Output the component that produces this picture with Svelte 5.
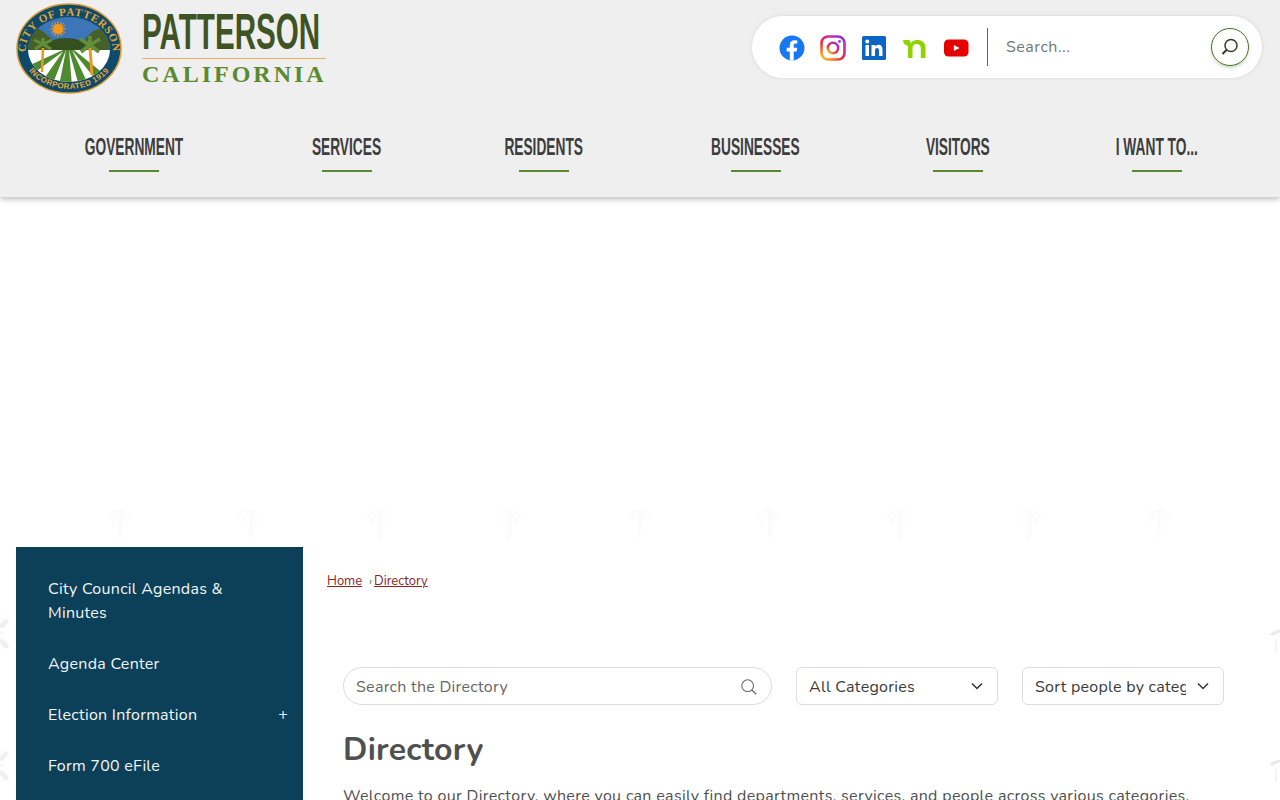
<script>
  const nav = [
    { label: 'GOVERNMENT', width: 99, gap: 0 },
    { label: 'SERVICES', width: 67, gap: 130 },
    { label: 'RESIDENTS', width: 78, gap: 125 },
    { label: 'BUSINESSES', width: 89, gap: 128 },
    { label: 'VISITORS', width: 66, gap: 125 },
    { label: 'I WANT TO...', width: 87, gap: 122 }
  ];
  const side = [
    { label: 'City Council Agendas & Minutes' },
    { label: 'Agenda Center' },
    { label: 'Election Information', plus: true },
    { label: 'Form 700 eFile' }
  ];
  const rowPalms = [120, 250, 379, 509, 639, 769, 899, 1029, 1158];
  const leftPalms = [618, 750];
  const rightPalms = [630, 760];
</script>

<div class="page">
  <div class="watermarks" aria-hidden="true">
    {#each rowPalms as x}
      <svg class="palm" style="left:{x - 20}px;top:503px" width="40" height="40" viewBox="0 0 40 40" fill="none" stroke="#fafafa" stroke-width="1.500">
        <path d="M20 6v32M20 7Q13 7 8 15M20 7Q27 7 32 15M20 7Q15 11 13 20M20 7Q25 11 27 20M22 6v24" />
      </svg>
    {/each}
    {#each leftPalms as y}
      <svg class="palm" style="left:0;top:{y}px" width="10" height="34" viewBox="0 0 10 34" fill="none" stroke="#f0f0f0" stroke-width="5">
        <path d="M0 9Q4 7 7 2M0 22Q4 24 7 30" />
        <path d="M0 15H4" stroke="#f6f6f6" stroke-width="3" />
      </svg>
    {/each}
    {#each rightPalms as y}
      <svg class="palm" style="right:0;top:{y}px" width="10" height="24" viewBox="0 0 10 24" fill="none" stroke="#e9e9e9" stroke-width="3">
        <path d="M1 5Q4 2 10 1" />
        <path d="M6 9V22" stroke="#f4f4f4" stroke-width="2" />
      </svg>
    {/each}
  </div>

  <header class="header">
    <div class="top">
      <a class="brand" href="#home" aria-label="City of Patterson home">
        <svg class="seal" width="110" height="92" viewBox="0 0 110 92">
          <defs>
            <clipPath id="inner"><ellipse cx="55" cy="47.500" rx="41" ry="32.500" /></clipPath>
            <path id="arcTop" d="M11.500 49A43.500 35.500 0 0 1 98.500 49" />
            <path id="arcBottom" d="M6.500 46A48.500 41 0 0 0 103.500 46" />
          </defs>
          <ellipse cx="55" cy="46.500" rx="52" ry="44.500" fill="#0d4a6b" stroke="#dd9a2c" stroke-width="1.500" />
          <g clip-path="url(#inner)">
            <rect x="10" y="10" width="90" height="42" fill="#3c76b8" />
            <path d="M10 50V38L23 26Q32 30 42 42L46 50Z" fill="#45602a" />
            <path d="M62 50 72 36Q84 21 96 30L102 42V50Z" fill="#45602a" />
            <ellipse cx="52" cy="43" rx="18" ry="7" fill="#34501f" />
            <rect x="10" y="48" width="90" height="36" fill="#ffffff" />
            <path d="M49 48 14 64 16 74 51 48ZM50 48 25 84H38L52 48ZM52 48 45 84H58L55 48ZM55 48 65 84H75L58 48ZM58 48 82 78 90 72 60 48Z" fill="#4d8a30" />
          </g>
          <g stroke="#f59a1c" stroke-width="1">
            <path d="M44 19v16M36 27h16M38.300 21.300l11.400 11.400M49.700 21.300l-11.400 11.400M40.500 20l7 14M47.500 20l-7 14M37 23.500l14 7M51 23.500l-14 7" />
          </g>
          <circle cx="44" cy="27" r="5" fill="#f59a1c" />
          <path d="M29 46 28 70" stroke="#e89a22" stroke-width="2.500" />
          <path d="M76 46 78 73" stroke="#e89a22" stroke-width="3" />
          <path d="M29 42 20 38M29 42 38 38M29 42 21 47M29 42 37 47M29 42V36" stroke="#648f38" stroke-width="3" />
          <path d="M76 43 66 37M76 43 86 37M76 43 67 50M76 43 85 50M76 43V34" stroke="#648f38" stroke-width="3.500" />
          <text class="seal-text"><textPath href="#arcTop" startOffset="50%" text-anchor="middle">CITY OF PATTERSON</textPath></text>
          <text class="seal-text small"><textPath href="#arcBottom" startOffset="50%" text-anchor="middle">INCORPORATED 1919</textPath></text>
        </svg>
        <span class="wordmark">
          <span class="patterson"><span>PATTERSON</span></span>
          <span class="california">CALIFORNIA</span>
        </span>
      </a>

      <div class="utility">
        <div class="socials">
          <svg width="26" height="26" viewBox="0 0 26 26" aria-label="Facebook"><circle cx="13" cy="13" r="12.500" fill="#1877f2" /><path d="M17.600 16.400 18.200 12.800H14.700V10.500C14.700 9.500 15.200 8.600 16.700 8.600H18.300V5.500C18.300 5.500 16.900 5.200 15.500 5.200 12.600 5.200 10.800 7 10.800 10.100V12.800H7.700V16.400H10.800V25.300C11.500 25.400 12.200 25.500 12.800 25.500S14 25.400 14.700 25.300V16.400Z" fill="#fff" /></svg>
          <svg width="26" height="26" viewBox="0 0 26 26" aria-label="Instagram"><defs><linearGradient id="ig" x1="0.100" y1="1" x2="0.900" y2="0"><stop offset="0" stop-color="#fdc21a" /><stop offset="0.400" stop-color="#f0263f" /><stop offset="0.750" stop-color="#c92bb0" /><stop offset="1" stop-color="#7b3ae0" /></linearGradient></defs><rect x="1.500" y="1.500" width="23" height="23" rx="6.500" fill="none" stroke="url(#ig)" stroke-width="2.600" /><circle cx="13" cy="13" r="5.200" fill="none" stroke="url(#ig)" stroke-width="2.600" /><circle cx="19.500" cy="6.500" r="1.400" fill="#b92cc0" /></svg>
          <svg width="26" height="26" viewBox="0 0 26 26" aria-label="LinkedIn"><rect x="1" y="1" width="24" height="24" rx="1.500" fill="#0a66c2" /><rect x="4.500" y="10" width="3.500" height="11" fill="#fff" /><circle cx="6.250" cy="6.500" r="2" fill="#fff" /><path d="M10.500 10H14V11.600C14.600 10.600 15.800 9.800 17.400 9.800 20.600 9.800 21.500 11.800 21.500 15V21H18V15.700C18 14 17.500 13 16.100 13 14.700 13 14 14 14 15.700V21H10.500Z" fill="#fff" /></svg>
          <svg width="26" height="26" viewBox="0 0 26 26" aria-label="Nextdoor"><path d="M1 5C1.200 8.500 3 10.500 6 10.800V23H10.500V13C10.500 10.500 12 9 14.500 9S18.800 10.500 18.800 13V23H23.500V12.500C23.500 7.500 20 5 15 5 12.500 5 10.500 6 9.300 7.700 8.300 7 7.800 6.200 7.600 5Z" fill="#8ed500" /></svg>
          <svg width="26" height="26" viewBox="0 0 26 26" aria-label="YouTube"><rect x="1" y="4.500" width="24.500" height="17" rx="4.500" fill="#e60000" /><path d="M10.800 10 16.600 13 10.800 16Z" fill="#fff" /></svg>
        </div>
        <span class="divider"></span>
        <span class="site-search">Search...</span>
        <span class="search-btn">
          <svg width="22" height="22" viewBox="0 0 22 22" fill="none" stroke="#333d29" stroke-width="1.500"><circle cx="12" cy="9.500" r="6" /><path d="M7.700 13.800 3.500 18" stroke-width="2" /></svg>
        </span>
      </div>
    </div>

    <nav class="nav">
      {#each nav as item}
        <a class="nav-item" href="#nav" style="width:{item.width}px;margin-left:{item.gap}px"><span class="nav-text">{item.label}</span></a>
      {/each}
    </nav>
  </header>

  <main class="layout">
    <aside class="sidebar">
      {#each side as item}
        <a class="side-item" href="#side">
          <span>{item.label}</span>
          {#if item.plus}<span class="plus">+</span>{/if}
        </a>
      {/each}
    </aside>

    <section class="content">
      <div class="crumbs"><a href="#home">Home</a><span class="sep">›</span><a href="#dir">Directory</a></div>

      <div class="filters">
        <div class="search-field">
          <span>Search the Directory</span>
          <svg width="18" height="18" viewBox="0 0 20 20" fill="none" stroke="#666" stroke-width="1.200"><circle cx="8.500" cy="8.500" r="6.500" /><path d="M13.200 13.200 18 18" stroke-width="1.500" /></svg>
        </div>
        <div class="select">
          <span class="select-text">All Categories</span>
          <svg width="12" height="8" viewBox="0 0 12 8" fill="none" stroke="#333" stroke-width="1.500"><path d="M1 1.500 6 6.500 11 1.500" /></svg>
        </div>
        <div class="select">
          <span class="select-text">Sort people by category</span>
          <svg width="12" height="8" viewBox="0 0 12 8" fill="none" stroke="#333" stroke-width="1.500"><path d="M1 1.500 6 6.500 11 1.500" /></svg>
        </div>
      </div>

      <h1>Directory</h1>
      <p>Welcome to our Directory, where you can easily find departments, services, and people across various categories.</p>
    </section>
  </main>
</div>

<style>
  :global(body) {
    margin: 0;
    background: #fff;
  }
  .page {
    position: relative;
    width: 1280px;
    height: 800px;
    overflow: hidden;
    font-family: "Nunito", "Lato", "Open Sans", sans-serif;
    color: #4f4f4f;
    letter-spacing: 0.27px;
  }
  .watermarks {
    position: absolute;
    inset: 0;
  }
  .palm {
    position: absolute;
  }
  a {
    color: inherit;
    text-decoration: none;
  }
  .header {
    position: relative;
    height: 197px;
    background: #efefef;
    box-shadow: 0 2px 6px rgba(0, 0, 0, 0.28);
  }
  .top {
    display: flex;
    justify-content: space-between;
    padding: 2px 18px 0 14px;
    height: 106px;
    box-sizing: border-box;
  }
  .brand {
    display: flex;
    gap: 18px;
    height: 92px;
  }
  .seal-text {
    font-family: "Liberation Serif", serif;
    font-size: 11px;
    letter-spacing: 0.8px;
    fill: #e9a62f;
    font-weight: 700;
  }
  .seal-text.small {
    font-family: "Liberation Sans", sans-serif;
    font-size: 8px;
    letter-spacing: 0.4px;
  }
  .wordmark {
    display: flex;
    flex-direction: column;
    width: 184px;
    padding-top: 6px;
  }
  .patterson {
    height: 50px;
    border-bottom: 1px solid #e7ae62;
    color: #3f5425;
    font-family: "Liberation Sans", sans-serif;
    font-size: 50px;
    line-height: 48px;
    font-weight: 700;
    letter-spacing: 0;
    white-space: nowrap;
  }
  .patterson span {
    display: inline-block;
    transform-origin: 0 50%;
    transform: scaleX(0.592);
  }
  .california {
    color: #5a8a30;
    font-family: "Liberation Serif", serif;
    font-weight: 700;
    font-size: 24px;
    letter-spacing: 3px;
    line-height: 30px;
    white-space: nowrap;
  }
  .utility {
    display: flex;
    align-items: center;
    width: 510px;
    height: 62px;
    margin-top: 14px;
    padding: 0 13px 0 27px;
    box-sizing: border-box;
    background: #fff;
    border-radius: 31px;
    box-shadow: 0 0 4px rgba(0, 0, 0, 0.1);
  }
  .socials {
    display: flex;
    gap: 15px;
    margin-top: 2px;
  }
  .divider {
    width: 1px;
    height: 38px;
    margin: 0 18px;
    background: #55752f;
  }
  .site-search {
    flex: 1;
    font-size: 16px;
    letter-spacing: 0.5px;
    color: #6f7775;
  }
  .search-btn {
    display: flex;
    align-items: center;
    justify-content: center;
    width: 36px;
    height: 36px;
    border: 1px solid #4d6a2c;
    border-radius: 50%;
    box-shadow: 0 2px 3px rgba(90, 138, 48, 0.3);
  }
  .nav {
    display: flex;
    padding-left: 84px;
  }
  .nav-item {
    display: flex;
    flex: none;
    flex-direction: column;
    align-items: center;
    color: #3d3d3d;
    font-family: "Liberation Sans", sans-serif;
    font-weight: 700;
    font-size: 24px;
    line-height: 28px;
    letter-spacing: 0;
    padding-top: 27px;
    white-space: nowrap;
  }
  .nav-text {
    display: block;
    transform: scaleX(0.572);
  }
  .nav-item::after {
    content: "";
    width: 50px;
    height: 2px;
    margin-top: 9px;
    background: #5a8a30;
  }
  .layout {
    position: relative;
    display: flex;
    padding: 350px 0 0 16px;
  }
  .sidebar {
    width: 287px;
    height: 253px;
    box-sizing: border-box;
    padding-top: 30px;
    background: #0c4059;
    color: #f2f6f8;
    font-size: 16px;
    line-height: 24px;
    flex: none;
  }
  .side-item {
    display: flex;
    justify-content: space-between;
    padding: 0 15px 27px 32px;
  }
  .side-item span:first-child {
    max-width: 200px;
  }
  .plus {
    font-size: 16px;
  }
  .content {
    flex: 1;
    padding: 25px 56px 0 24px;
    min-width: 0;
  }
  .crumbs {
    font-size: 13px;
    line-height: 18px;
    letter-spacing: 0;
    color: #8b2323;
  }
  .crumbs a {
    text-decoration: underline;
  }
  .sep {
    margin: 0 2px 0 7px;
    font-size: 11px;
    color: #666;
  }
  .filters {
    display: flex;
    gap: 24px;
    margin: 76px 0 0 16px;
    height: 38px;
  }
  .search-field,
  .select {
    display: flex;
    align-items: center;
    justify-content: space-between;
    box-sizing: border-box;
    height: 38px;
    background: #fff;
    border: 1px solid #dcdcdc;
    font-size: 16px;
    white-space: nowrap;
  }
  .search-field {
    width: 429px;
    padding: 2px 13px 0 12px;
    border-radius: 19px;
    color: #666;
  }
  .select {
    width: 202px;
    padding: 2px 14px 0 12px;
    border-radius: 6px;
    color: #3a3a3a;
    gap: 11px;
  }
  .select svg {
    margin-top: -2px;
  }
  .select-text {
    overflow: hidden;
    flex: 1;
  }
  h1 {
    margin: 25px 0 0 16px;
    font-size: 32px;
    line-height: 40px;
    font-weight: 700;
    color: #505050;
  }
  p {
    margin: 14px 0 0 16px;
    font-size: 16px;
    line-height: 24px;
    letter-spacing: 0.33px;
    white-space: nowrap;
    color: #4f4f4f;
  }
</style>
